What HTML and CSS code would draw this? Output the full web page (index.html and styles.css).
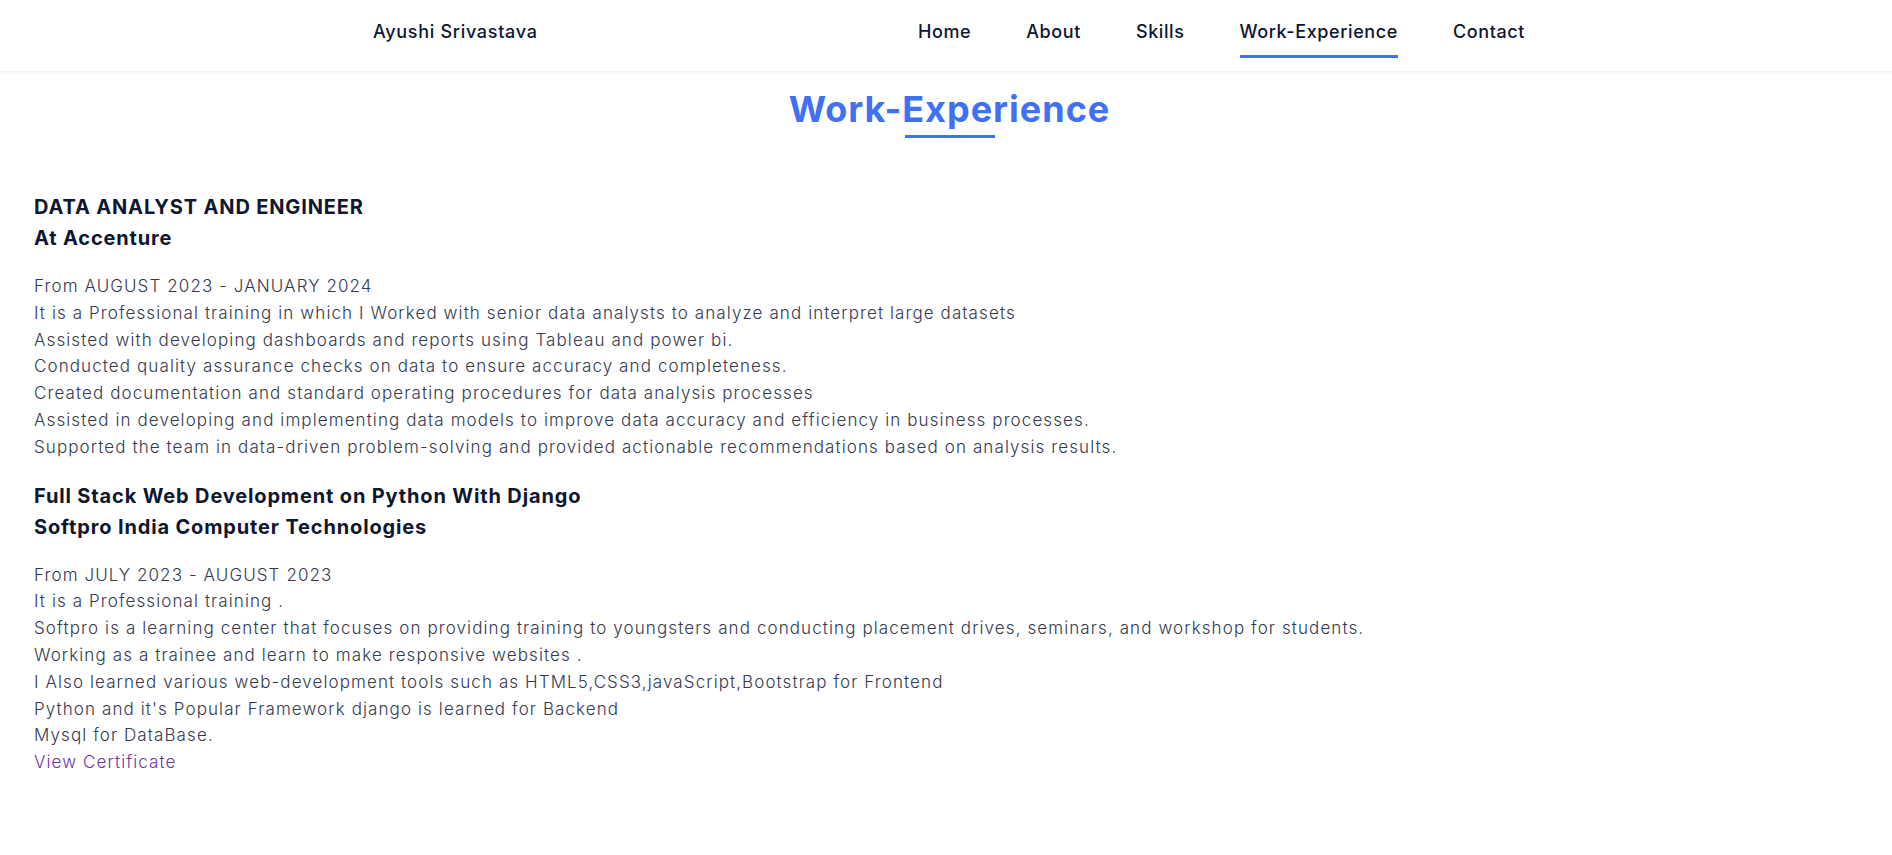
FILE: index.html
```html
<!DOCTYPE html>
<html lang="en">
<head>
<meta charset="utf-8">
<title>Ayushi Srivastava - Work-Experience</title>
<link rel="stylesheet" href="styles.css">
</head>
<body>
<header class="site-header">
  <div class="header-inner">
    <a class="brand" href="#">Ayushi Srivastava</a>
    <nav class="nav">
      <a class="nav-link" href="#">Home</a>
      <a class="nav-link" href="#">About</a>
      <a class="nav-link" href="#">Skills</a>
      <a class="nav-link active" href="#">Work-Experience</a>
      <a class="nav-link" href="#">Contact</a>
    </nav>
  </div>
</header>
<main class="page">
  <div class="section-title">
    <h2 class="title">Work-Experience</h2>
    <span class="title-bar"></span>
  </div>

  <section class="job">
    <h3 class="job-head">DATA ANALYST AND ENGINEER<br>At Accenture</h3>
    <p class="job-body">From AUGUST 2023 - JANUARY 2024<br>
It is a Professional training in which I Worked with senior data analysts to analyze and interpret large datasets<br>
Assisted with developing dashboards and reports using Tableau and power bi.<br>
Conducted quality assurance checks on data to ensure accuracy and completeness.<br>
Created documentation and standard operating procedures for data analysis processes<br>
Assisted in developing and implementing data models to improve data accuracy and efficiency in business processes.<br>
Supported the team in data-driven problem-solving and provided actionable recommendations based on analysis results.</p>
  </section>

  <section class="job">
    <h3 class="job-head">Full Stack Web Development on Python With Django<br>Softpro India Computer Technologies</h3>
    <p class="job-body">From JULY 2023 - AUGUST 2023<br>
It is a Professional training .<br>
Softpro is a learning center that focuses on providing training to youngsters and conducting placement drives, seminars, and workshop for students.<br>
Working as a trainee and learn to make responsive websites .<br>
I Also learned various web-development tools such as HTML5,CSS3,javaScript,Bootstrap for Frontend<br>
Python and it's Popular Framework django is learned for Backend<br>
Mysql for DataBase.<br>
<a class="cert-link" href="#">View Certificate</a></p>
  </section>
</main>
</body>
</html>
```

FILE: styles.css
```css
* {
  box-sizing: border-box;
}

body {
  margin: 0;
  background: #ffffff;
  font-family: "Inter", "Open Sans", sans-serif;
  color: #0e1630;
}

.site-header {
  height: 72px;
  background: #ffffff;
  box-shadow: 0 1px 3px rgba(0, 0, 0, 0.05);
  border-bottom: 1px solid #f1f1f1;
}

.header-inner {
  max-width: 1158px;
  height: 100%;
  margin: 0 auto;
  display: flex;
  align-items: flex-start;
  justify-content: space-between;
  padding: 0 0 0 6px;
}

.brand {
  margin-top: 20px;
  font-size: 18px;
  line-height: 24px;
  font-weight: 500;
  letter-spacing: 0.7px;
  color: #0e1630;
  text-decoration: none;
}

.nav {
  display: flex;
  gap: 55px;
}

.nav-link {
  padding-top: 20px;
  padding-bottom: 11px;
  font-size: 18px;
  line-height: 24px;
  font-weight: 500;
  letter-spacing: 0.6px;
  color: #0e1630;
  text-decoration: none;
  border-bottom: 3px solid transparent;
}

.nav-link.active {
  border-bottom-color: #4070f4;
}

.page {
  padding: 13px 34px 60px;
}

.section-title {
  display: flex;
  flex-direction: column;
  align-items: center;
  padding-left: 7px;
}

.title {
  margin: 0;
  font-size: 36px;
  line-height: 48px;
  font-weight: 700;
  letter-spacing: 1px;
  color: #4070f4;
}

.title-bar {
  display: block;
  width: 90px;
  height: 3px;
  background: #4070f4;
  margin-top: 2px;
}

.job {
  margin-top: 54px;
}

.job + .job {
  margin-top: 20px;
}

.job-head {
  margin: 0;
  font-size: 20px;
  line-height: 31px;
  font-weight: 700;
  letter-spacing: 0.85px;
  color: #0e1630;
}

.job-body {
  margin: 19px 0 0;
  font-size: 17px;
  line-height: 26.8px;
  font-weight: 300;
  letter-spacing: 1.1px;
  color: #343a4f;
}

.cert-link {
  color: #6b35a5;
  text-decoration: none;
}
```
